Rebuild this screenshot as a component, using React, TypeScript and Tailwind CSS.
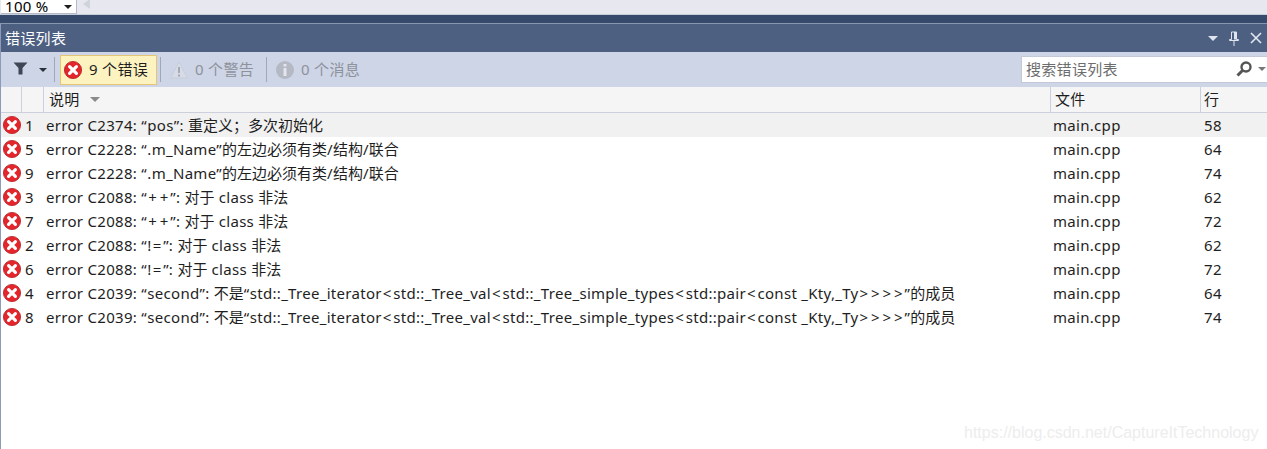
const rows = [
  ["1", "error C2374: “pos”: 重定义；多次初始化", "58"],
  ["5", "error C2228: “.m_Name”的左边必须有类/结构/联合", "64"],
  ["9", "error C2228: “.m_Name”的左边必须有类/结构/联合", "74"],
  ["3", "error C2088: “++”: 对于 class 非法", "62"],
  ["7", "error C2088: “++”: 对于 class 非法", "72"],
  ["2", "error C2088: “!=”: 对于 class 非法", "62"],
  ["6", "error C2088: “!=”: 对于 class 非法", "72"],
  ["4", "error C2039: “second”: 不是“std::_Tree_iterator<std::_Tree_val<std::_Tree_simple_types<std::pair<const _Kty,_Ty>>>>”的成员", "64"],
  ["8", "error C2039: “second”: 不是“std::_Tree_iterator<std::_Tree_val<std::_Tree_simple_types<std::pair<const _Kty,_Ty>>>>”的成员", "74"],
];

// the symbols sit wider in the original font, so give them some air
function Message({ text }: { text: string }) {
  const parts = text.split(/([<>+=“”]|[\u4e00-\u9fff；]+)/);
  return (
    <>
      {parts.map((p, i) =>
        /^[<>+=]$/.test(p) ? (
          <span key={i} className="tracking-[1.9px] pl-px">{p}</span>
        ) : p === "“" ? (
          <span key={i} className="tracking-[0.6px]">{p}</span>
        ) : p === "”" ? (
          <span key={i} className="tracking-[0.3px]">{p}</span>
        ) : /^[\u4e00-\u9fff；]/.test(p) ? (
          <span key={i} className="tracking-normal">{p}</span>
        ) : (
          <span key={i}>{p}</span>
        )
      )}
    </>
  );
}

function ErrorIcon() {
  return (
    <svg width="18" height="18" viewBox="0 0 18 18" className="shrink-0">
      <circle cx="9" cy="9" r="8.6" fill="#e3262b" stroke="#b81c22" strokeWidth="0.8" />
      <path d="M5.6 5.6 L12.4 12.4 M12.4 5.6 L5.6 12.4" stroke="#fff" strokeWidth="3.2" strokeLinecap="round" />
    </svg>
  );
}

function WarnIcon() {
  return (
    <svg width="18" height="18" viewBox="0 0 18 18" className="shrink-0">
      <path d="M9 1 L17.5 17 H0.5 Z" fill="#d6dbe5" stroke="#c8ced9" />
      <path d="M8 6 H10 V12 H8 Z M8 13.5 H10 V15.5 H8 Z" fill="#a4a9b3" />
    </svg>
  );
}

function InfoIcon() {
  return (
    <svg width="18" height="18" viewBox="0 0 18 18" className="shrink-0">
      <circle cx="9" cy="9" r="9" fill="#b4b9c4" />
      <path d="M7.5 3 H10.5 V5.5 H7.5 Z M7.5 7 H10.5 V15 H7.5 Z" fill="#e3e6ee" />
    </svg>
  );
}

function Sep() {
  return <div className="w-px h-[25px] bg-[#9fa8ba] shrink-0" />;
}

export default function App() {
  return (
    <div
      className="relative w-[1267px] h-[449px] overflow-hidden flex flex-col bg-white text-[15px] tracking-[0.3px] text-[#1e1e1e]"
      style={{ fontFamily: '"Noto Sans", "Noto Sans CJK SC", sans-serif' }}
    >
      {/* top strip */}
      <div className="h-[14px] bg-[#e7e8ef] flex items-end shrink-0">
        <div className="w-[76px] h-[14px] ml-px bg-white border-r border-b border-[#b5bac6] flex items-end justify-between pl-[4px] pr-[4px] overflow-hidden">
          <span className="text-[15px] leading-[13px] text-black">100 %</span>
          <span className="mb-[4px] w-0 h-0 border-x-[4px] border-x-transparent border-t-[4px] border-t-[#1e1e1e]" />
        </div>
        <span className="ml-[6px] mb-[5px] w-0 h-0 border-y-[5px] border-y-transparent border-r-[7px] border-r-[#d0d3db]" />
      </div>
      <div className="h-px bg-[#c9cdd9] shrink-0" />
      <div className="h-[8px] bg-[#364a6b] shrink-0" />

      <div className="flex-1 flex flex-col border-l border-[#8c9bbb] min-h-0">
        {/* title */}
        <div className="h-[29px] shrink-0 bg-[#4d6082] border-t border-[#8896b0] flex items-center justify-between pl-[4px] pr-[5px]">
          <span className="text-white">错误列表</span>
          <div className="flex items-center gap-[11px]">
            <span className="w-0 h-0 border-x-[5px] border-x-transparent border-t-[5px] border-t-[#dfe4ee]" />
            <svg width="10" height="15" viewBox="0 0 10 15">
              <path d="M2.5 1 H7.5 V8.5 H9.5 V9.5 H0.5 V8.5 H2.5 Z M5 9.5 V15" stroke="#dfe4ee" strokeWidth="1" fill="none" />
              <path d="M5 1 H7.5 V8.5 H5 Z" fill="#dfe4ee" />
            </svg>
            <svg width="12" height="12" viewBox="0 0 12 12">
              <path d="M1 1 L11 11 M11 1 L1 11" stroke="#dfe4ee" strokeWidth="1.7" />
            </svg>
          </div>
        </div>

        {/* toolbar */}
        <div className="h-[35px] shrink-0 bg-[#cdd5e6] flex items-center pl-[12px]">
          <svg width="15" height="13" viewBox="0 0 15 13" className="shrink-0 -mt-[3px]">
            <path d="M0.5 0.5 H14.5 L9.5 6 V12.5 H5.5 V6 Z" fill="#3f4654" />
          </svg>
          <span className="ml-[11px] w-0 h-0 border-x-[4px] border-x-transparent border-t-[4px] border-t-[#2a2f3a]" />
          <div className="ml-[7px] mr-[5px]"><Sep /></div>
          <div className="w-[97px] h-[30px] bg-[#fdf3c0] border border-[#e6c674] flex items-center pl-[3px] gap-[7px]">
            <ErrorIcon />
            <span className="text-[#1e1e1e]">9 个错误</span>
          </div>
          <div className="ml-[3px]"><Sep /></div>
          <div className="w-[105px] flex items-center pl-[9px] gap-[7px] text-[#8e929c]">
            <WarnIcon />
            <span>0 个警告</span>
          </div>
          <Sep />
          <div className="flex items-center pl-[9px] gap-[7px] text-[#8e929c]">
            <InfoIcon />
            <span>0 个消息</span>
          </div>
          <div className="ml-auto w-[246px] h-[27px] -mt-px bg-white border border-r-0 border-[#c3c9d8] flex items-center pl-[4px] pr-px">
            <span className="text-[#6d6d6d]">搜索错误列表</span>
            <svg width="18" height="18" viewBox="0 0 18 18" className="ml-auto">
              <circle cx="11" cy="7" r="4.5" fill="none" stroke="#555" strokeWidth="2.4" />
              <path d="M7.5 10.5 L2.5 15.5" stroke="#555" strokeWidth="3" />
            </svg>
            <span className="ml-[5px] w-0 h-0 border-x-[4px] border-x-transparent border-t-[4px] border-t-[#777]" />
          </div>
        </div>

        {/* header */}
        <div className="h-[26px] shrink-0 bg-[#f5f5f5] border-b border-[#cdd0dc] flex">
          <div className="w-[21px] border-r border-[#cdd0dc]" />
          <div className="w-[22px] border-r border-[#cdd0dc]" />
          <div className="w-[1007px] border-r border-[#cdd0dc] flex items-center pl-[5px] gap-[10px]">
            <span>说明</span>
            <span className="w-0 h-0 border-x-[5px] border-x-transparent border-t-[5px] border-t-[#8a8a8a]" />
          </div>
          <div className="w-[150px] border-r border-[#cdd0dc] flex items-center pl-[4px]">文件</div>
          <div className="flex-1 flex items-center pl-[3px]">行</div>
        </div>

        {/* rows */}
        {rows.map((r, i) => (
          <div key={i} className={`h-[24px] shrink-0 flex items-center ${i === 0 ? "bg-[#f1f1f1]" : ""}`}>
            <div className="w-[21px] flex justify-center pl-px"><ErrorIcon /></div>
            <div className="w-[24px] pl-[3px]">{r[0]}</div>
            <div className="w-[1007px] whitespace-nowrap overflow-hidden"><Message text={r[1]} /></div>
            <div className="w-[151px]">main.cpp</div>
            <div className="flex-1">{r[2]}</div>
          </div>
        ))}
      </div>

      <div className="absolute left-[964px] top-[421px] text-[16px] tracking-normal text-[#ededed]" style={{ fontFamily: '"Liberation Sans", sans-serif' }}>
        https://blog.csdn.net/CaptureItTechnology
      </div>
    </div>
  );
}
